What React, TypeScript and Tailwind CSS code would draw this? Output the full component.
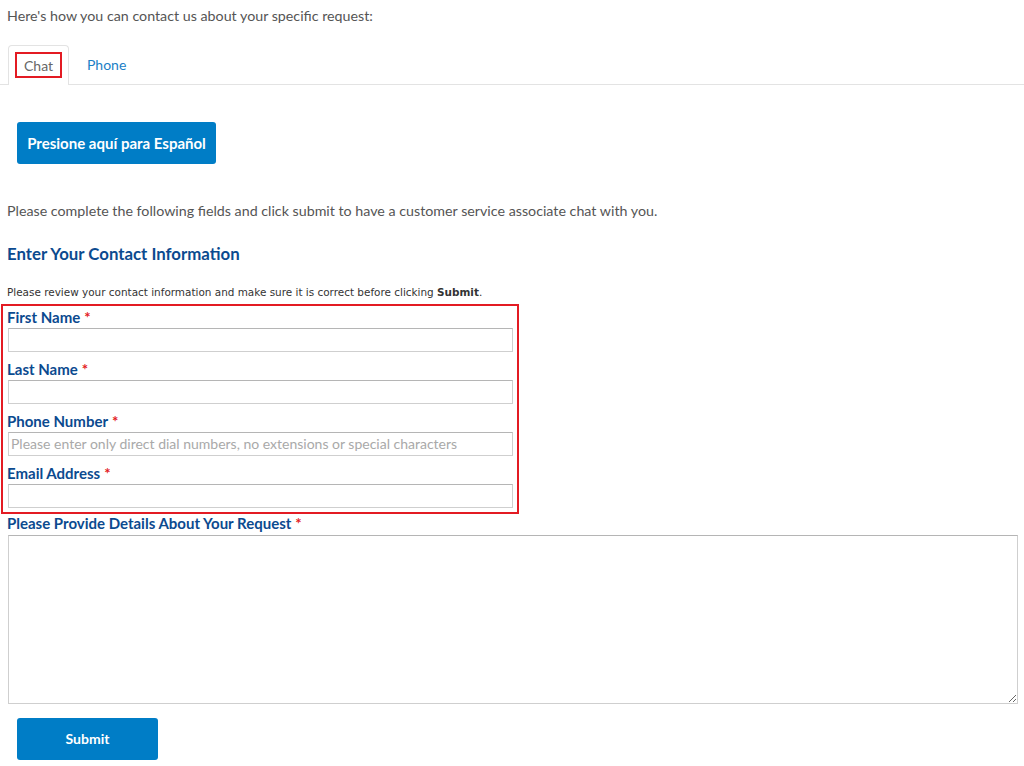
import React from "react";

const Label = ({ children, inside }: { children: React.ReactNode; inside?: boolean }) => (
  <div className={`h-[20px] flex items-center text-[15px] font-bold text-[#0b4a8f] leading-none ${inside ? "pl-[4px]" : "pl-[7px]"}`}>
    <span>{children}</span>
    <span className="text-[#e31b23] ml-[4px]">*</span>
  </div>
);

const Input = ({ placeholder }: { placeholder?: string }) => (
  <input
    placeholder={placeholder}
    className="block w-[505px] h-[24px] ml-[5px] border border-[#cfcfcf] border-t-[#b5b5b5] bg-white px-[2px] text-[14px] placeholder:text-[#a9a9a9] outline-none"
  />
);

export default function App() {
  return (
    <div className="bg-white w-[1024px] h-[766px] overflow-hidden text-[#555]" style={{ fontFamily: "Lato, 'Open Sans', sans-serif" }}>
      <div className="pl-[7px] pt-[5px] text-[14.25px] h-[40px]">Here's how you can contact us about your specific request:</div>
      <div className="flex items-end h-[45px] border-b border-[#e3e3e3] pl-[8px]">
        <div className="h-[40px] w-[61px] border border-b-0 border-[#e3e3e3] rounded-t-[4px] bg-white -mb-px relative flex items-center justify-center">
          <span className="border-2 border-[#e31b23] px-[7px] h-[26px] mb-[1px] flex items-center text-[14px] text-[#666]">Chat</span>
        </div>
        <div className="h-[40px] flex items-center pl-[18px] text-[14px] text-[#1a7fc6]">Phone</div>
      </div>
      <div className="pl-[17px] pt-[37px]">
        <button className="h-[42px] px-[10px] w-[199px] bg-[#007dc6] rounded-[3px] text-white font-bold text-[15px] whitespace-nowrap">Presione aquí para Español</button>
      </div>
      <div className="pl-[7px] pt-[36px] text-[14.25px]">Please complete the following fields and click submit to have a customer service associate chat with you.</div>
      <div className="pl-[7px] pt-[20px] text-[16.8px] font-bold text-[#0b4a8f]">Enter Your Contact Information</div>
      <div className="pl-[7px] pt-[18px] text-[10.45px] text-[#333] leading-[15px]" style={{ fontFamily: "'DejaVu Sans', Verdana, sans-serif" }}>
        Please review your contact information and make sure it is correct before clicking <b>Submit</b>.
      </div>
      <div className="ml-[1px] mt-[4px] w-[518px] border-2 border-[#e31b23] pt-[2px] pb-[4px] flex flex-col gap-[8px]">
        <div><Label inside>First Name</Label><Input /></div>
        <div><Label inside>Last Name</Label><Input /></div>
        <div><Label inside>Phone Number</Label><Input placeholder="Please enter only direct dial numbers, no extensions or special characters" /></div>
        <div><Label inside>Email Address</Label><Input /></div>
      </div>
      <div>
        <Label>Please Provide Details About Your Request</Label>
        <textarea className="block ml-[8px] mt-[1px] w-[1010px] h-[169px] border border-[#cfcfcf] border-t-[#b5b5b5] outline-none resize" />
      </div>
      <div className="pl-[17px] pt-[14px]">
        <button className="h-[42px] w-[141px] bg-[#007dc6] rounded-[3px] text-white font-bold text-[14px]">Submit</button>
      </div>
    </div>
  );
}
